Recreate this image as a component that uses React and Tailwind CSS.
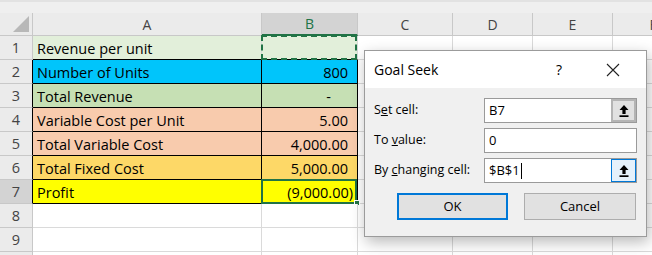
import React from 'react';

const font = { fontFamily: '"Open Sans", "Noto Sans", sans-serif' };

const rows = [
  { n: 1, label: 'Revenue per unit', value: '', bg: 'bg-[#e2efda]', pr: 'pr-[9px]', ants: true },
  { n: 2, label: 'Number of Units', value: '800', bg: 'bg-[#00c5fb]', pr: 'pr-[9px]', boxed: true },
  { n: 3, label: 'Total Revenue', value: '-', bg: 'bg-[#c6e0b4]', pr: 'pr-[26px]', boxed: true },
  { n: 4, label: 'Variable Cost per Unit', value: '5.00', bg: 'bg-[#f8cbad]', pr: 'pr-[9px]', boxed: true },
  { n: 5, label: 'Total Variable Cost', value: '4,000.00', bg: 'bg-[#f8cbad]', pr: 'pr-[9px]', boxed: true },
  { n: 6, label: 'Total Fixed Cost', value: '5,000.00', bg: 'bg-[#fdd867]', pr: 'pr-[9px]', boxed: true },
  { n: 7, label: 'Profit', value: '(9,000.00)', bg: 'bg-[#ffff00]', pr: 'pr-[4px]', boxed: true, active: true },
  { n: 8 },
  { n: 9 },
  { n: 10, hideNum: true },
];

function UpArrow() {
  return (
    <svg width="12" height="14" viewBox="0 0 12 14">
      <path d="M6 1 L10.5 6 L7.6 6 L7.6 10 L4.4 10 L4.4 6 L1.5 6 Z" fill="#000" />
      <rect x="1.5" y="11.3" width="9" height="1.7" fill="#000" />
    </svg>
  );
}

function Field({ label, value, button, focused, caret }) {
  return (
    <div className="flex items-center h-[25px] mb-[5px]">
      <div className="w-[110px] shrink-0 text-[12.5px] text-black">{label}</div>
      <div className="w-[153px] shrink-0 h-[25px] bg-white border border-[#9a9a9a] flex items-center">
        <div className="flex-1 pl-[4px] text-[13px] text-black flex items-center">
          {value}
          {caret && <span className="inline-block w-px h-[16px] bg-black ml-[1px]" />}
        </div>
        {button && (
          <div
            className={
              focused
                ? 'w-[25px] h-[23px] flex items-center justify-center bg-[#e5f1fb] border border-[#0078d7]'
                : 'w-[25px] h-[23px] flex items-center justify-center bg-[#e1e1e1] border-2 border-[#b4b4b4]'
            }
          >
            <UpArrow />
          </div>
        )}
      </div>
    </div>
  );
}

function GoalSeek() {
  return (
    <div
      className="absolute left-[364px] top-[50px] w-[283px] h-[187px] border border-[#9b9b9b] bg-[#f0f0f0] shadow-[2px_5px_14px_rgba(0,0,0,0.28)]"
      style={font}
    >
      <div className="h-[37px] bg-white flex items-center pl-[9px] pr-[16px]">
        <div className="flex-1 text-[14px] text-black">Goal Seek</div>
        <div className="w-[34px] mr-[20px] text-center text-[14px] text-black">?</div>
        <div className="w-[34px] flex justify-center">
          <svg width="16" height="16" viewBox="0 0 16 16">
            <path d="M2 2 L14 14 M14 2 L2 14" stroke="#222" strokeWidth="1.1" />
          </svg>
        </div>
      </div>
      <div className="pt-[10px] px-[9px]">
        <Field label={<>S<span className="underline">e</span>t cell:</>} value="B7" button />
        <Field label={<>To <span className="underline">v</span>alue:</>} value="0" />
        <Field label={<>By <span className="underline">c</span>hanging cell:</>} value="$B$1" button focused caret />
        <div className="flex mt-[10px] ml-[23px] gap-[16px]">
          <div className="w-[111px] h-[27px] bg-[#e1e1e1] border-2 border-[#0078d7] flex items-center justify-center text-[13px] text-black">
            OK
          </div>
          <div className="w-[112px] h-[27px] bg-[#e1e1e1] border border-[#adadad] flex items-center justify-center text-[13px] text-black">
            Cancel
          </div>
        </div>
      </div>
    </div>
  );
}

export default function App() {
  return (
    <div className="relative w-[652px] h-[255px] overflow-hidden bg-white" style={font}>
      {/* strip above the headers */}
      <div className="h-[13px] bg-[#efefef] border-t-2 border-[#e2e2e2]" />

      {/* column headers */}
      <div className="flex h-[23px] bg-[#ebebeb] text-[14px] text-[#444]">
        <div className="w-[33px] shrink-0 border-r border-b border-[#c8c8c8] flex items-end justify-end pr-[2px] pb-[2px]">
          <svg width="17" height="17" viewBox="0 0 17 17">
            <path d="M16 0 L16 16 L0 16 Z" fill="#b8b8b8" />
          </svg>
        </div>
        <div className="w-[229px] shrink-0 border-r border-b border-[#c8c8c8] flex items-center justify-center">A</div>
        <div className="w-[96px] shrink-0 bg-[#d3d3d3] border-r border-[#c8c8c8] border-b-2 border-b-[#217346] flex items-center justify-center text-[#217346]">
          B
        </div>
        <div className="w-[95px] shrink-0 border-r border-b border-[#c8c8c8] flex items-center justify-center">C</div>
        <div className="w-[80px] shrink-0 border-r border-b border-[#c8c8c8] flex items-center justify-center">D</div>
        <div className="w-[80px] shrink-0 border-r border-b border-[#c8c8c8] flex items-center justify-center">E</div>
        <div className="w-[80px] shrink-0 border-b border-[#c8c8c8] flex items-center justify-center">F</div>
      </div>

      {/* rows */}
      {rows.map((r) => {
        const dark = r.n <= 7;
        return (
          <div key={r.n} className="flex h-[24px] text-[14.5px]">
            <div
              className={
                (r.active ? 'bg-[#d3d3d3] ' : 'bg-[#ebebeb] ') +
                (r.boxed ? 'border-r border-r-black ' : 'border-r border-r-[#c8c8c8] ') +
                'w-[33px] shrink-0 border-b border-b-[#c8c8c8] flex items-center justify-center text-[#444]'
              }
            >
              {r.hideNum ? '' : r.n}
            </div>
            <div
              className={
                (r.bg || 'bg-white') +
                (dark ? ' border-b-black' : ' border-b-[#dadada]') +
                (r.boxed ? ' border-r-black' : ' border-r-[#dadada]') +
                ' w-[229px] shrink-0 border-r border-b flex items-center pl-[4px] pt-[2px] text-black'
              }
            >
              {r.label}
            </div>
            <div
              className={
                (r.bg || 'bg-white') +
                (dark ? ' border-b-black' : ' border-b-[#dadada]') +
                (r.boxed ? ' border-r-black' : ' border-r-[#dadada]') +
                ' relative w-[96px] shrink-0 border-r border-b flex items-center justify-end pt-[2px] text-black ' +
                (r.pr || '')
              }
            >
              {r.value}
              {r.ants && (
                <div className="absolute -left-px -top-px w-[96px] h-[25px] border-2 border-dashed border-[#217346]" />
              )}
              {r.active && (
                <>
                  <div className="absolute -left-px -top-px w-[96px] h-[25px] border-2 border-[#217346]" />
                  <div className="absolute -right-[3px] -bottom-[3px] w-[6px] h-[6px] bg-[#217346] border border-white" />
                </>
              )}
            </div>
            <div className="w-[95px] shrink-0 border-r border-b border-[#dadada]" />
            <div className="w-[80px] shrink-0 border-r border-b border-[#dadada]" />
            <div className="w-[80px] shrink-0 border-r border-b border-[#dadada]" />
            <div className="w-[80px] shrink-0 border-b border-[#dadada]" />
          </div>
        );
      })}

      <GoalSeek />
    </div>
  );
}
